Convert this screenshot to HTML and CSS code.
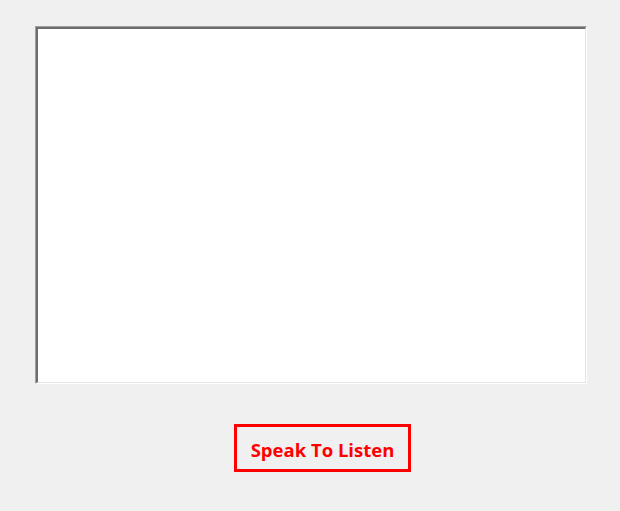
FILE: index.html
```html
<!DOCTYPE html>
<html>
<head>
<meta charset="utf-8">
<link rel="stylesheet" href="styles.css">
</head>
<body>
<div class="app">
  <div class="edit-outer">
    <div class="edit-inner"></div>
  </div>
  <div class="btn-row">
    <button class="speak">Speak To Listen</button>
  </div>
</div>
</body>
</html>
```
FILE: styles.css
```css
html, body {
  margin: 0;
  padding: 0;
  background: #f0f0f0;
  width: 620px;
  height: 511px;
  overflow: hidden;
}
.app {
  display: flex;
  flex-direction: column;
  padding: 26px 0 0 35px;
}
.edit-outer {
  width: 552px;
  height: 358px;
  box-sizing: border-box;
  border-style: solid;
  border-width: 1px;
  border-color: #a0a0a0 #ffffff #ffffff #a0a0a0;
}
.edit-inner {
  width: 100%;
  height: 100%;
  box-sizing: border-box;
  background: #ffffff;
  border-style: solid;
  border-width: 2px 1px 1px 2px;
  border-color: #6d6d6d #e3e3e3 #e3e3e3 #6d6d6d;
}
.btn-row {
  display: flex;
  padding-top: 40px;
  padding-left: 199px;
}
.speak {
  width: 177px;
  height: 48px;
  box-sizing: border-box;
  border: 3px solid #ff0000;
  background: #f0f0f0;
  color: #ff0000;
  font-family: "Open Sans", "DejaVu Sans", sans-serif;
  font-weight: bold;
  font-size: 18.5px;
  padding: 2px 0 0 0;
  margin: 0;
  display: flex;
  align-items: center;
  justify-content: center;
}
```
